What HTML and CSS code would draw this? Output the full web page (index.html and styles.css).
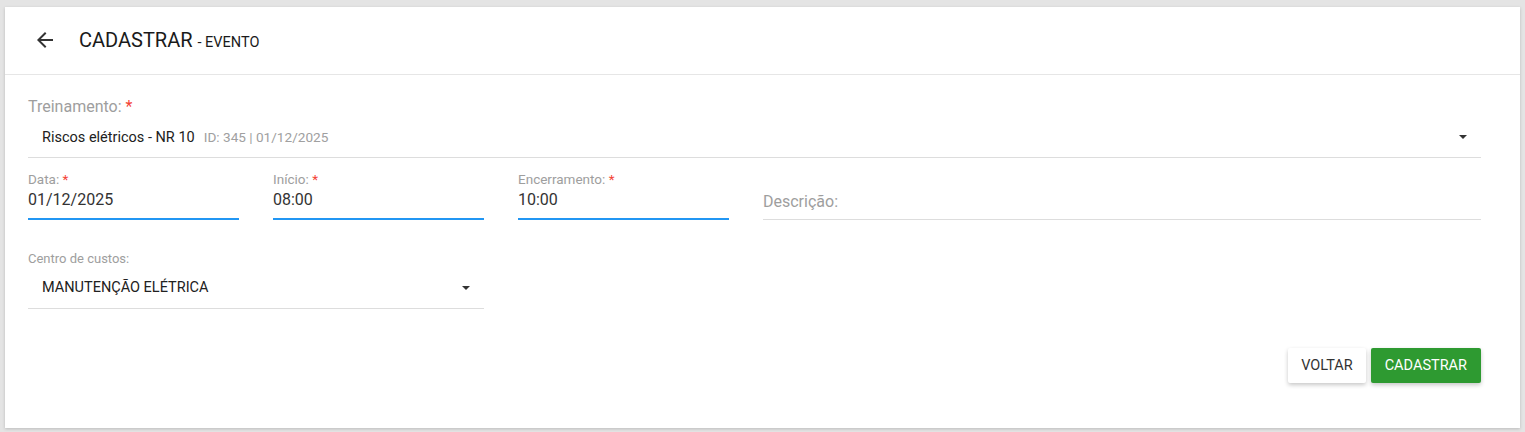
FILE: index.html
```html
<!DOCTYPE html>
<html lang="pt">
<head>
<meta charset="utf-8">
<title>Cadastrar - Evento</title>
<link rel="stylesheet" href="styles.css">
</head>
<body>
<div class="card">
  <header class="card-header">
    <button class="back" aria-label="Voltar">
      <svg width="24" height="24" viewBox="0 0 24 24"><path d="M20 11H7.83l5.59-5.59L12 4l-8 8 8 8 1.41-1.41L7.83 13H20v-2z" fill="#333"/></svg>
    </button>
    <h1 class="title">CADASTRAR <span class="sub">- EVENTO</span></h1>
  </header>
  <form class="form">
    <div class="field select-field full">
      <label class="label-lg">Treinamento: <span class="req">*</span></label>
      <div class="select">
        <span class="value">Riscos elétricos - NR 10</span>
        <span class="meta">ID: 345 | 01/12/2025</span>
        <span class="caret"></span>
      </div>
    </div>
    <div class="row">
      <div class="field input-field">
        <label class="label-sm">Data: <span class="req">*</span></label>
        <div class="input focused">01/12/2025</div>
      </div>
      <div class="field input-field">
        <label class="label-sm">Início: <span class="req">*</span></label>
        <div class="input focused">08:00</div>
      </div>
      <div class="field input-field">
        <label class="label-sm">Encerramento: <span class="req">*</span></label>
        <div class="input focused">10:00</div>
      </div>
      <div class="field input-field">
        <div class="input placeholder">Descrição:</div>
      </div>
    </div>
    <div class="row2">
      <div class="field select-field">
        <label class="label-md">Centro de custos:</label>
        <div class="select">
          <span class="value upper">MANUTENÇÃO ELÉTRICA</span>
          <span class="caret"></span>
        </div>
      </div>
    </div>
    <div class="actions">
      <button type="button" class="btn btn-light">VOLTAR</button>
      <button type="button" class="btn btn-green">CADASTRAR</button>
    </div>
  </form>
</div>
</body>
</html>
```
FILE: styles.css
```css
* { box-sizing: border-box; }
html, body { margin: 0; }
body {
  background: #e4e4e4;
  padding: 7px 5px 4px 5px;
  font-family: Roboto, "Liberation Sans", Arial, sans-serif;
  color: #212121;
}
.card {
  background: #fff;
  height: 421px;
  box-shadow: 0 1px 3px rgba(0,0,0,0.18);
  display: flex;
  flex-direction: column;
}
.card-header {
  height: 68px;
  border-bottom: 1px solid #e6e6e6;
  display: flex;
  align-items: center;
  padding-left: 28px;
}
.back {
  border: 0;
  background: none;
  padding: 0;
  width: 24px;
  height: 24px;
  display: flex;
  margin-right: 22px;
  margin-top: -2px;
  cursor: pointer;
}
.title {
  margin: 0;
  font-size: 20px;
  font-weight: 400;
  color: #1a1a1a;
  margin-top: -2px;
}
.title .sub { font-size: 14.5px; }
.form {
  padding: 22px 39px 0 23px;
  display: flex;
  flex-direction: column;
  flex: 1;
}
.req { color: #f44336; }
.label-lg { display: block; font-size: 16px; line-height: 20px; color: #9e9e9e; }
.label-sm { display: block; font-size: 13.5px; line-height: 16px; color: #9e9e9e; margin-top: -1px; margin-bottom: 1px; }
.label-md { display: block; font-size: 13px; line-height: 16px; color: #9e9e9e; }
.select {
  height: 41px;
  border-bottom: 1px solid #ddd;
  display: flex;
  align-items: center;
  padding-left: 14px;
  padding-right: 14px;
  font-size: 14.5px;
  color: #212121;
}
.select .meta { font-size: 13.6px; color: #a0a0a0; margin-left: 9px; }
.select .caret {
  margin-left: auto;
  width: 0; height: 0;
  border-left: 4.5px solid transparent;
  border-right: 4.5px solid transparent;
  border-top: 4.5px solid #333;
}
.row {
  margin-top: 14px;
  display: grid;
  grid-template-columns: 211px 211px 211px 1fr;
  column-gap: 34px;
  align-items: end;
}
.input {
  font-size: 16px;
  line-height: 24px;
  height: 32px;
  padding-top: 0;
  color: #333;
  border-bottom: 1px solid #ddd;
}
.input.focused { border-bottom: 2px solid #2196f3; }
.input.placeholder { color: #9e9e9e; height: 32px; padding-top: 2px; }
.row2 {
  margin-top: 31px;
  width: 456px;
}
.row2 .select { height: 42px; padding-right: 14px; }
.actions {
  margin-top: auto;
  margin-bottom: 45px;
  display: flex;
  justify-content: flex-end;
  gap: 5px;
}
.btn {
  height: 35px;
  border: 0;
  border-radius: 2px;
  font-family: Roboto, "Liberation Sans", Arial, sans-serif;
  font-size: 14.5px;
  font-weight: 400;
  padding: 0 14px;
  box-shadow: 0 2px 4px rgba(0,0,0,0.22);
  cursor: pointer;
}
.btn-light { background: #fff; color: #333; padding: 0 13px; }
.btn-green { background: #2e9a31; color: #fff; }
```
